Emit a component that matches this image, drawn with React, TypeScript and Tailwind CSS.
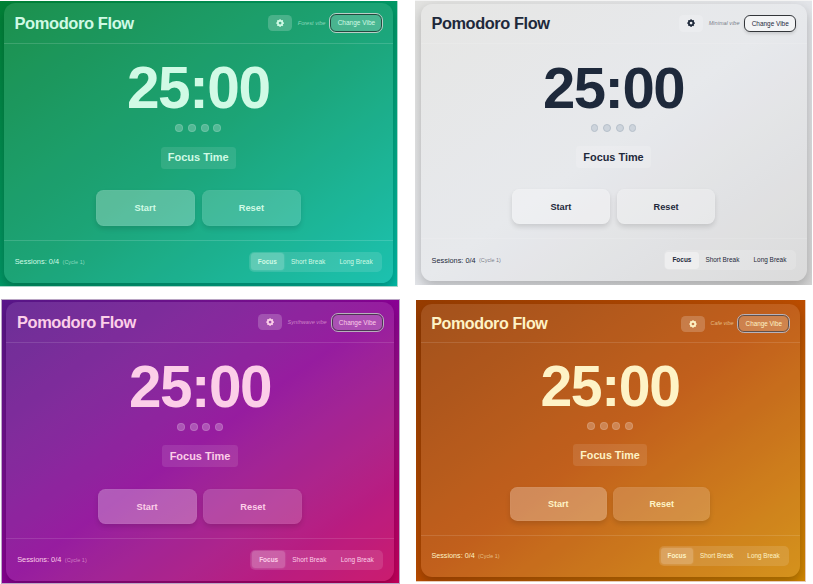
import { clsx } from "clsx";

type Vibe = {
  name: string;
  frame: string;
  inset: string;
  card: string;
  text: string;
  muted: string;
  line: string;
  dot: string;
  gear: string;
  change: string;
  pill: string;
  start: string;
  reset: string;
  tabs: string;
  activeTab: string;
};

const colored = {
  card: "bg-white/11 shadow-[0_6px_12px_rgba(0,0,0,0.25)]",
  line: "border-white/15",
  dot: "border-white/15 bg-white/24",
  gear: "bg-white/20",
  pill: "bg-white/10",
  start: "bg-white/27 border-white/3 shadow-[0_3px_5px_rgba(0,0,0,0.12)]",
  reset: "bg-white/17 border-white/2 shadow-[0_3px_5px_rgba(0,0,0,0.12)]",
  tabs: "bg-white/12",
  activeTab: "bg-white/20 shadow-[0_0_2px_rgba(255,255,255,0.25)]",
};

const vibes: Vibe[] = [
  {
    ...colored,
    name: "Forest",
    frame:
      "h-[286px] w-[398px] border-r border-b border-r-[#a6d6c9] border-b-[#a6d6c9] bg-linear-to-br from-green-700 via-emerald-600 to-teal-500 text-[10px] mt-px",
    inset: "ml-[3.5px] mt-[2px] h-[280px] w-[389.5px]",
    text: "text-emerald-100",
    muted: "text-emerald-100/60",
    change: "bg-white/20 border-[#24483e] outline-[#b9cfc7]",
  },
  {
    name: "Minimal",
    frame:
      "ml-[17px] mt-0 h-[285px] w-[397px] border-t border-t-[#f4f4f4] bg-linear-to-br from-[#e2e2e0] via-[#e3e5e9] to-[#d4d4d4] text-[9.91px]",
    inset: "ml-[5.5px] mt-[2.5px] h-[277.5px] w-[386px]",
    card: "bg-white/16 shadow-[0_5px_12px_rgba(0,0,0,0.22)]",
    text: "text-[#1e293b]",
    muted: "text-[#1e293b]/60",
    line: "border-white/12",
    dot: "border-[#b6c0ca] bg-[#cdd4dc]",
    gear: "bg-white/20",
    change:
      "bg-white/50 border-[#33363a] outline-transparent shadow-[0_2px_3px_rgba(0,0,0,0.12)]",
    pill: "bg-white/16",
    start: "bg-white/30 border-white/5 shadow-[0_3px_5px_rgba(0,0,0,0.12)]",
    reset: "bg-white/24 border-white/5 shadow-[0_3px_5px_rgba(0,0,0,0.12)]",
    tabs: "bg-white/16",
    activeTab: "bg-white/36",
  },
  {
    ...colored,
    name: "Synthwave",
    frame:
      "ml-px mt-[12px] h-[285px] w-[399px] border border-[#b9a5c4] bg-linear-to-br from-purple-900 via-fuchsia-800 to-pink-700 text-[9.97px]",
    inset: "ml-[4px] mt-[2.2px] h-[278.5px] w-[388px]",
    text: "text-[#fccee8]",
    muted: "text-[#fccee8]/55",
    line: "border-white/12",
    change: "bg-white/22 border-[#4e3355] outline-[#b9aebd]",
  },
  {
    ...colored,
    name: "Cafe",
    frame:
      "ml-[16px] mt-[13px] h-[282px] w-[390px] border-r border-b border-r-[#e8c9b5] border-b-[#e8c9b5] bg-linear-to-br from-amber-800 via-amber-700 to-yellow-600 text-[9.75px]",
    inset: "ml-[4.5px] mt-[4px] h-[272.5px] w-[379px]",
    text: "text-amber-100",
    muted: "text-amber-100/60",
    line: "border-white/12",
    change: "bg-white/22 border-[#5f504c] outline-[#b9b3ba]",
  },
];

function Gear() {
  const teeth = [0, 45, 90, 135, 180, 225, 270, 315];
  return (
    <svg viewBox="0 0 24 24" className="size-[0.82em]" fill="currentColor">
      {teeth.map((a) => (
        <rect key={a} x="9.5" y="1" width="5" height="5" rx="1" transform={`rotate(${a} 12 12)`} />
      ))}
      <circle cx="12" cy="12" r="6.6" fill="none" stroke="currentColor" strokeWidth="5" />
    </svg>
  );
}

function Timer({ v }: { v: Vibe }) {
  return (
    <section className={clsx("shrink-0 overflow-hidden", v.frame, v.text)}>
      <div className={clsx("flex flex-col rounded-[1.15em]", v.inset, v.card)}>
        <header className={clsx("flex h-[4.05em] shrink-0 items-center justify-between border-b pr-[1.06em] pl-[1.1em]", v.line)}>
          <h1 className="text-[1.65em] leading-none font-bold tracking-tight">Pomodoro Flow</h1>
          <div className="flex items-center pt-[0.08em]">
            <button className={clsx("flex h-[1.65em] w-[2.4em] items-center justify-center rounded-[0.45em]", v.gear)}>
              <Gear />
            </button>
            <span className={clsx("ml-[0.6em] flex pt-[0.1em] italic", v.muted)}>
              <span className="text-[0.56em] leading-none">{v.name} vibe</span>
            </span>
            <button
              className={clsx(
                "ml-[0.5em] flex h-[1.74em] w-[5.2em] items-center justify-center rounded-[0.6em] border outline-1",
                v.change,
              )}
            >
              <span className="pt-[0.15em] text-[0.65em] leading-none whitespace-nowrap">Change Vibe</span>
            </button>
          </div>
        </header>

        <main className="flex min-h-0 flex-1 flex-col items-center pt-[1.45em]">
          <div className="flex h-[6em] items-center">
            <span className="text-[5.86em] leading-none font-bold tracking-tight">25:00</span>
          </div>
          <div className="mt-[0.62em] flex gap-[0.48em]">
            {[1, 2, 3, 4].map((n) => (
              <i key={n} className={clsx("size-[0.8em] rounded-full border", v.dot)} />
            ))}
          </div>
          <div className={clsx("mt-[1.45em] flex h-[2.2em] w-[7.55em] items-center justify-center rounded-[0.35em]", v.pill)}>
            <span className="pt-[0.04em] text-[1.1em] leading-none font-bold whitespace-nowrap">Focus Time</span>
          </div>
          <div className="mt-[2.18em] flex gap-[0.7em]">
            <button className={clsx("flex h-[3.52em] w-[9.92em] items-center justify-center rounded-[0.75em] border", v.start)}>
              <span className="pt-[0.22em] text-[0.93em] leading-none font-bold">Start</span>
            </button>
            <button className={clsx("flex h-[3.52em] w-[9.92em] items-center justify-center rounded-[0.75em] border", v.reset)}>
              <span className="pt-[0.22em] text-[0.93em] leading-none font-bold">Reset</span>
            </button>
          </div>
        </main>

        <footer className={clsx("flex h-[4.3em] shrink-0 items-center justify-between border-t pr-[1.1em] pl-[1.12em]", v.line)}>
          <p className="flex items-center gap-[0.35em]">
            <span className="text-[0.74em] leading-none">Sessions: 0/4</span>
            <span className={clsx("flex pt-[0.1em]", v.muted)}>
              <span className="text-[0.55em] leading-none">(Cycle 1)</span>
            </span>
          </p>
          <div className={clsx("flex h-[1.98em] items-center rounded-[0.5em] pr-[0.2em] pl-[0.15em]", v.tabs)}>
            <button className={clsx("flex h-[1.7em] w-[3.35em] items-center justify-center rounded-[0.35em]", v.activeTab)}>
              <span className="text-[0.65em] leading-none font-bold">Focus</span>
            </button>
            <button className="flex w-[4.82em] items-center justify-center">
              <span className="text-[0.65em] leading-none">Short Break</span>
            </button>
            <button className="flex w-[4.78em] items-center justify-center">
              <span className="text-[0.65em] leading-none">Long Break</span>
            </button>
          </div>
        </footer>
      </div>
    </section>
  );
}

export default function App() {
  return (
    <div className="h-[584px] w-[813px] overflow-hidden bg-white font-['Liberation_Sans',Arial,sans-serif]">
      <div className="flex h-[287px] items-start">
        <Timer v={vibes[0]} />
        <Timer v={vibes[1]} />
      </div>
      <div className="flex items-start">
        <Timer v={vibes[2]} />
        <Timer v={vibes[3]} />
      </div>
    </div>
  );
}
